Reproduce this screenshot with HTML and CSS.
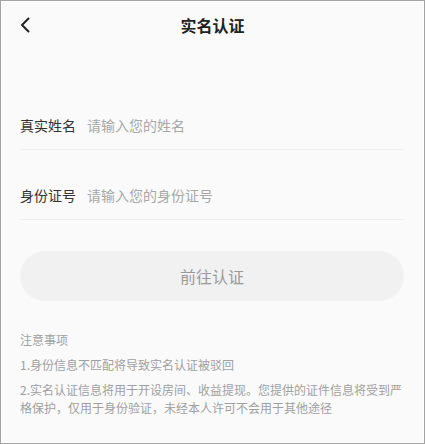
FILE: index.html
```html
<!DOCTYPE html>
<html lang="zh-CN">
<head>
<meta charset="utf-8">
<title>实名认证</title>
<link rel="stylesheet" href="styles.css">
</head>
<body>
<div class="frame">
  <header class="nav">
    <svg class="back" width="12" height="16" viewBox="0 0 12 16">
      <path d="M9.5 1.5 L3 8 L9.5 14.5" fill="none" stroke="#222" stroke-width="2" stroke-linecap="round" stroke-linejoin="round"/>
    </svg>
    <div class="title">实名认证</div>
  </header>
  <main class="content">
    <div class="form">
      <div class="row">
        <span class="label">真实姓名</span>
        <span class="placeholder">请输入您的姓名</span>
      </div>
      <div class="row">
        <span class="label">身份证号</span>
        <span class="placeholder">请输入您的身份证号</span>
      </div>
    </div>
    <div class="btn">前往认证</div>
    <div class="notes">
      <p class="note-title">注意事项</p>
      <p class="note">1.身份信息不匹配将导致实名认证被驳回</p>
      <p class="note">2.实名认证信息将用于开设房间、收益提现。您提供的证件信息将受到严格保护，仅用于身份验证，未经本人许可不会用于其他途径</p>
    </div>
  </main>
</div>
</body>
</html>
```

FILE: styles.css
```css
html, body {
  margin: 0;
  padding: 0;
  height: 100%;
}
body {
  font-family: "Noto Sans CJK SC", "Noto Sans", sans-serif;
  background: #fafafa;
}
.frame {
  box-sizing: border-box;
  width: 425px;
  height: 444px;
  border: 1px solid #a3a3a3;
  box-shadow: inset 0 0 0 1px #ffffff;
  background: #fafafa;
  overflow: hidden;
}
.nav {
  position: relative;
  height: 47px;
  display: flex;
  align-items: center;
  justify-content: center;
}
.back {
  position: absolute;
  left: 18px;
  top: 16px;
}
.title {
  font-size: 16px;
  font-weight: 700;
  color: #222;
  line-height: 20px;
}
.content {
  padding: 0 20px 0 19px;
}
.form {
  padding-top: 53px;
}
.row {
  display: flex;
  align-items: center;
  height: 48px;
  border-bottom: 1px solid #efefef;
  font-size: 14px;
}
.row + .row {
  margin-top: 21px;
}
.label {
  color: #333;
  width: 67px;
  flex: none;
}
.placeholder {
  color: #a8a8a8;
}
.btn {
  margin-top: 31px;
  height: 50px;
  border-radius: 25px;
  background: #f1f1f1;
  color: #9a9a9a;
  font-size: 16px;
  display: flex;
  align-items: center;
  justify-content: center;
}
.notes {
  padding-top: 30px;
  font-size: 12px;
  line-height: 18px;
  color: #a0a0a0;
}
.notes p {
  margin: 0;
}
.notes p + p {
  margin-top: 7px;
}
```
